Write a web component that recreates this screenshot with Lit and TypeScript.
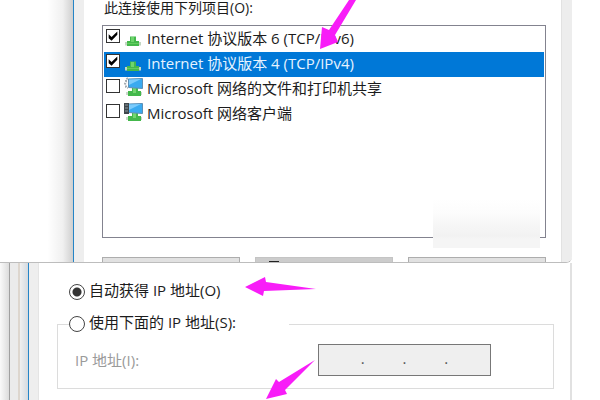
import { LitElement, html, css, svg, nothing } from "lit";
import { customElement, property } from "lit/decorators.js";
import { classMap } from "lit/directives/class-map.js";

type IconKind = "protocol" | "service" | "client";

interface Item {
  label: string;
  icon: IconKind;
  checked: boolean;
  selected?: boolean;
}

const ITEMS: Item[] = [
  { label: "Internet 协议版本 6 (TCP/IPv6)", icon: "protocol", checked: true },
  { label: "Internet 协议版本 4 (TCP/IPv4)", icon: "protocol", checked: true, selected: true },
  { label: "Microsoft 网络的文件和打印机共享", icon: "service", checked: false },
  { label: "Microsoft 网络客户端", icon: "client", checked: false },
];

@customElement("network-icon")
class NetworkIcon extends LitElement {
  @property() kind: IconKind = "protocol";

  static styles = css`
    :host { display: block; width: 20px; height: 20px; flex: none; }
    svg { display: block; }
  `;

  render() {
    const plug = svg`
      <path d="M6 9.500h6v4.500h3v5H3v-5h3z" fill="#44b84c"/>
      <path d="M7 10h3v5H7z" fill="#6fd46c"/>
      <path d="M1 15h2v3.500H1zM15 15h2v3.500h-2z" fill="#c3d6c3"/>
      <path d="M3 16h12v1H3z" fill="#62cc5f"/>`;
    const screen = svg`
      <path d="M8 11h6v3h3v5H4v-5h4z" fill="#44b84c"/>
      <path d="M9 11h3v5H9z" fill="#74d66f"/>
      <path d="M2 15h2v3H2zM17 15h1v3h-1z" fill="#ccd6cc"/>
      <path d="M4.500 2L18.500 1.500V11.500L4.500 10.500z" fill="#3aaaf0" stroke="#5d8fb5"/>
      <path d="M5 2.500l12-.5L5 8z" fill="#7ccbfb"/>`;
    return html`<svg width="20" height="20" viewBox="0 0 20 20" aria-hidden="true">
      ${this.kind === "protocol" ? plug : screen}
      ${this.kind === "service"
        ? svg`<path d="M4 1L2 2.500v2L1 6.500l1 1.500v2l2 1" fill="none" stroke="#a3abb1" stroke-width="2" stroke-dasharray="2 1"/>`
        : nothing}
      ${this.kind === "client"
        ? svg`<path d="M0 1h5v11H0z" fill="#3f474c"/><path d="M1 3h3M1 6h3M1 9h3" stroke="#8d979c"/>`
        : nothing}
    </svg>`;
  }
}

@customElement("connection-items")
class ConnectionItems extends LitElement {
  static styles = css`
    :host { display: block; }
    .list {
      box-sizing: border-box;
      min-height: 213px;
      margin: 0;
      padding: 1px;
      list-style: none;
      border: 1px solid #83838f;
      background: #fff;
    }
    .row {
      display: flex;
      height: 25px;
      padding-left: 2px;
      color: #1c1c1c;
    }
    .row.selected { background: #0078d7; color: #e6f3ff; }
    .box {
      appearance: none;
      box-sizing: border-box;
      flex: none;
      width: 14px;
      height: 14px;
      margin: 2px 4px 0 0;
      border: 1px solid #333;
      background: #fff;
    }
    .box:checked::before {
      content: "";
      display: block;
      width: 12px;
      height: 12px;
      background: #000;
      clip-path: polygon(14% 36%, 38% 58%, 86% 12%, 86% 40%, 38% 90%, 14% 68%);
    }
    .label { margin-left: 3px; line-height: 22px; white-space: nowrap; }
  `;

  render() {
    return html`<ul class="list">
      ${ITEMS.map(
        (item, i) => html`<li class=${classMap({ row: true, selected: !!item.selected })}>
          <input class="box" type="checkbox" id="item-${i}" .checked=${item.checked} />
          <network-icon kind=${item.icon}></network-icon>
          <label class="label" for="item-${i}">${item.label}</label>
        </li>`
      )}
    </ul>`;
  }
}

@customElement("app-root")
class AppRoot extends LitElement {
  static styles = css`
    :host {
      display: block;
      position: relative;
      min-height: 100vh;
      overflow: hidden;
      background: #fff;
      font: 15px "Open Sans", "Noto Sans CJK SC", sans-serif;
      color: #1c1c1c;
    }
    .window { display: flex; margin-right: 28px; }
    .top { border-bottom: 1px solid #bdbdbd; border-radius: 0 0 6px 0; overflow: hidden; }
    .shade { flex: none; width: 73px; background: linear-gradient(90deg, #fff 65%, #f0f0f0 86%, #cfcfcf); }
    .frame { flex: none; width: 10px; border-left: 1px solid #2585c7; background: #eee; }
    .edge { flex: none; width: 10px; border-left: 1px solid #e2e2e2; background: #ededed; }
    .sheet { flex: 1; min-width: 0; padding: 0 15px 0 18px; }
    .heading { margin: 0 0 7px 2px; height: 18px; line-height: 16px; font-size: 14px; font-weight: 400; }
    .list-area { position: relative; }
    .smudge {
      position: absolute;
      right: 6px;
      bottom: -10px;
      width: 107px;
      height: 49px;
      background: linear-gradient(#fff0, #fcfcfc 30%, #f7f7f7 50%, #f2f2f2 75%, #f5f5f5 82%);
    }
    .buttons { display: grid; grid-template-columns: repeat(3, 1fr); gap: 15px; height: 5px; margin-top: 19px; overflow: hidden; }
    .button {
      display: flex;
      align-items: flex-start;
      height: 28px;
      padding: 0;
      border: 1px solid #adadad;
      background: #e1e1e1;
    }
    .button.disabled { border-color: #c4c4c4; background: #ccc; }
    .mark { width: 10px; height: 1px; margin: 3px 0 0 13px; background: #222; }

    .bottom { min-height: 137px; }
    .back { flex: none; width: 9px; border-right: 1px solid #a0a0a0; background: linear-gradient(90deg, #fafafa, #dcdcdc); }
    .strip { flex: none; width: 8px; border-right: 2px solid #ddd6ce; background: #ebebeb; }
    .strip-two { flex: none; width: 8px; background: linear-gradient(90deg, #f0f0f0, #d4dae0); }
    .bottom .frame { width: 9px; border-right: 1px solid #e4e4e4; }
    .form { flex: 1; min-width: 0; padding: 17px 16px 0 18px; border-right: 2px solid #e1e1e1; }
    .choice { display: flex; align-items: center; gap: 4px; height: 24px; line-height: 20px; }
    .choice label { padding-bottom: 4px; }
    .form > .choice { margin-left: 12px; }
    .radio {
      appearance: none;
      box-sizing: border-box;
      flex: none;
      width: 16px;
      height: 16px;
      margin: 0;
      border: 1px solid #444;
      border-radius: 50%;
      background: #fff;
    }
    .radio:checked { background: radial-gradient(circle, #333 4px, #fff 5px); }
    .group { margin: 8px 0 0; padding: 0 62px 12px 17px; border: 1px solid #dcdcdc; min-width: 0; }
    .legend { box-sizing: border-box; width: 220px; margin-left: -6px; padding: 0; }
    .field { display: flex; justify-content: space-between; align-items: center; margin-top: 8px; }
    .caption { padding-bottom: 2px; color: #9a9a9a; }
    .address {
      box-sizing: border-box;
      display: flex;
      align-items: center;
      width: 173px;
      height: 32px;
      padding: 0 4px;
      border: 1px solid #777;
      background: #efefef;
      color: #555;
    }
    .address span { padding-bottom: 4px; }
    .octet { flex: 1; min-width: 0; width: 0; height: 24px; padding: 0; border: 0; background: none; font: inherit; text-align: center; }
    .arrows { position: absolute; left: 0; top: 0; pointer-events: none; }
  `;

  render() {
    return html`
      <section class="window top">
        <div class="shade"></div>
        <div class="frame"></div>
        <div class="sheet">
          <h1 class="heading">此连接使用下列项目(O):</h1>
          <div class="list-area">
            <connection-items></connection-items>
            <div class="smudge"></div>
          </div>
          <div class="buttons">
            <button class="button"></button>
            <button class="button disabled" disabled><span class="mark"></span></button>
            <button class="button"></button>
          </div>
        </div>
        <div class="edge"></div>
      </section>
      <section class="window bottom">
        <div class="back"></div>
        <div class="strip"></div>
        <div class="strip-two"></div>
        <div class="frame"></div>
        <form class="form">
          <div class="choice">
            <input class="radio" type="radio" name="mode" id="auto" checked />
            <label for="auto">自动获得 IP 地址(O)</label>
          </div>
          <fieldset class="group">
            <legend class="legend">
              <div class="choice">
                <input class="radio" type="radio" name="mode" id="manual" />
                <label for="manual">使用下面的 IP 地址(S):</label>
              </div>
            </legend>
            <div class="field">
              <label class="caption" for="octet-0">IP 地址(I):</label>
              <div class="address">
                ${[0, 1, 2, 3].map(
                  (i) => html`${i ? html`<span>.</span>` : nothing}<input class="octet" id="octet-${i}" maxlength="3" disabled />`
                )}
              </div>
            </div>
          </fieldset>
        </form>
      </section>
      <svg class="arrows" width="600" height="400" viewBox="0 0 600 400" fill="#f81df8" aria-hidden="true">
        <path d="M320 49L322 27L329 30L349 0H356L335 35L338 42Z" />
        <path d="M245 287L265 277L266 282L316 289L264 291L263 296Z" />
        <path d="M266 399L276 379L279 382L315 360L285 390L287 394Z" />
      </svg>
    `;
  }
}
